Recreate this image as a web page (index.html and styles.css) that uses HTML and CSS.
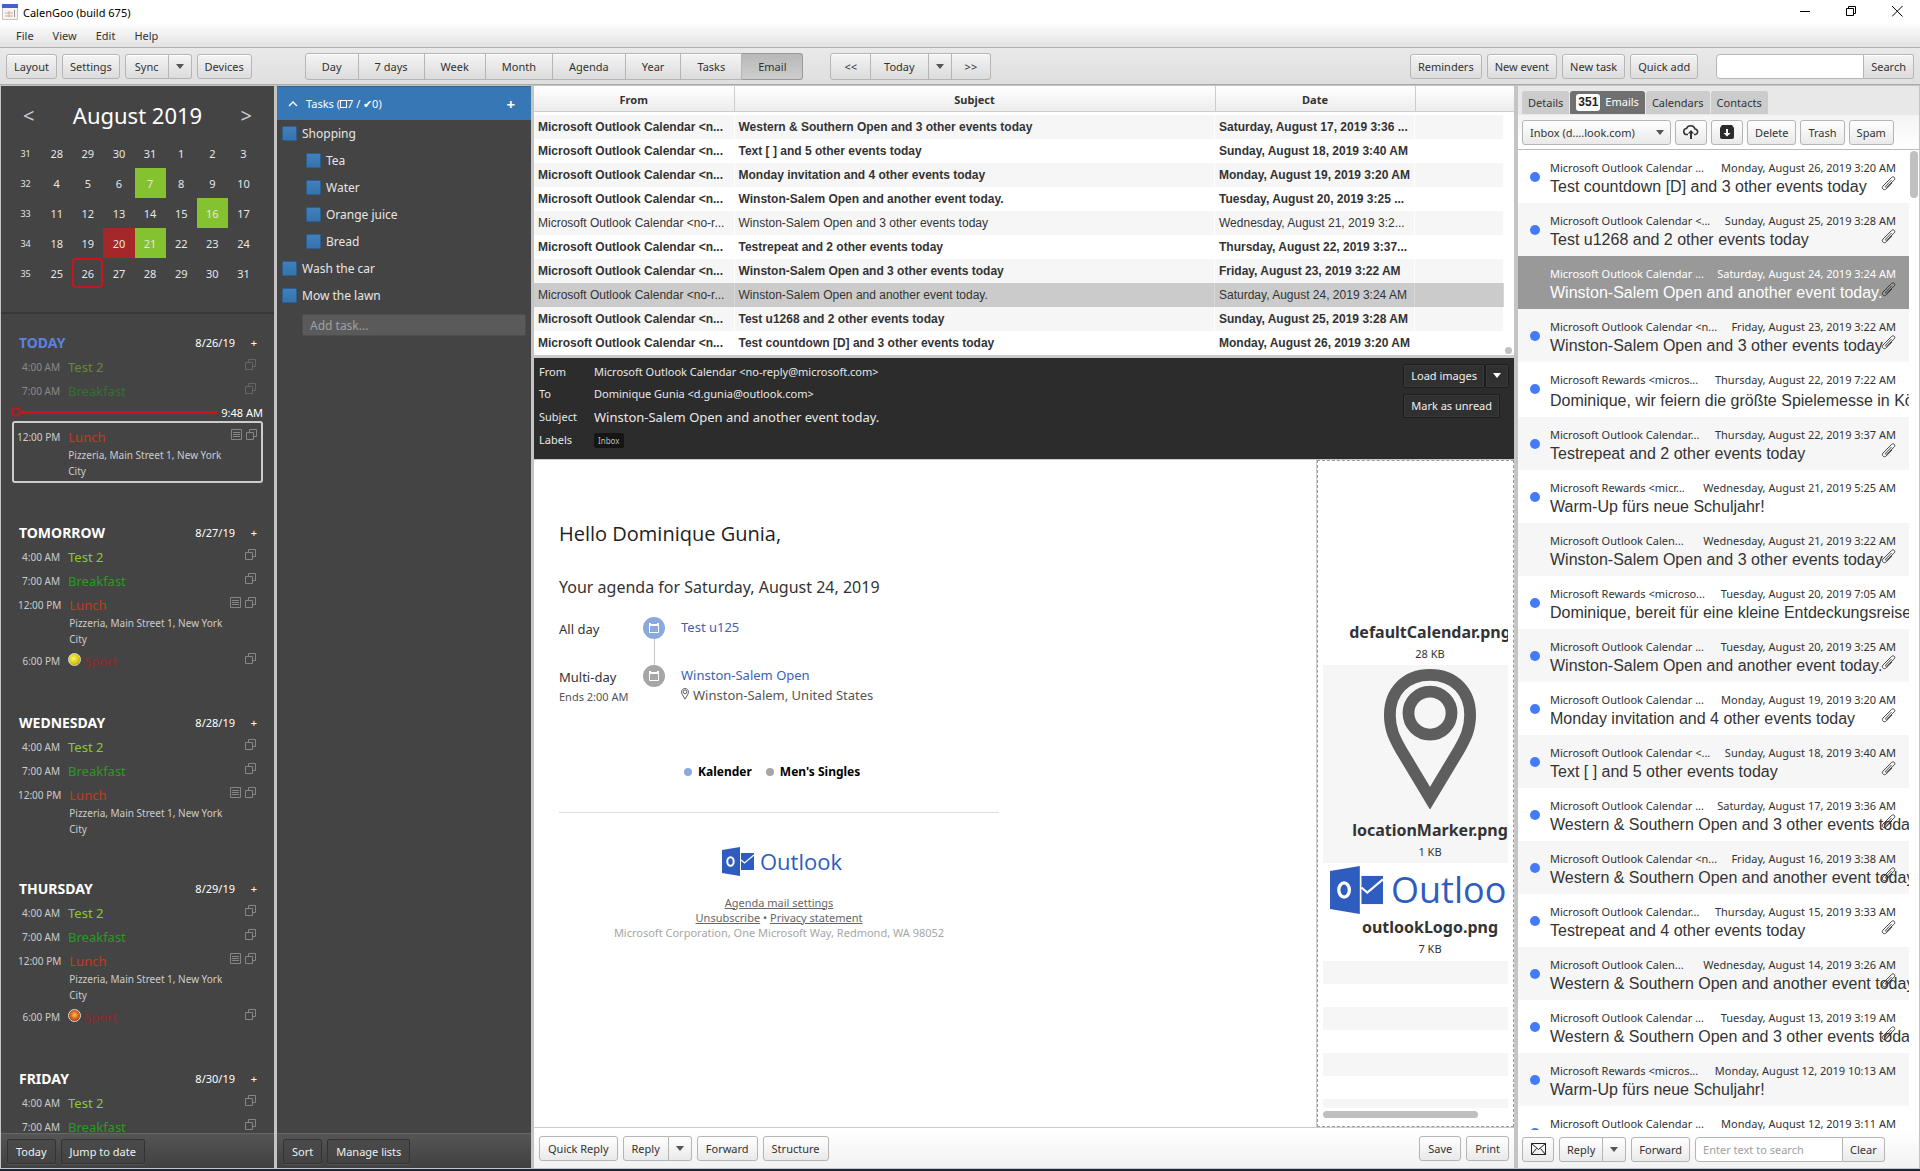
FILE: index.html
```html
<!DOCTYPE html>
<html lang="en">

<head>
    <meta charset="UTF-8">
    <meta name="viewport" content="width=device-width, initial-scale=1.0">
    <title>CalenGoo</title>
    <link rel="stylesheet" href="styles.css">
</head>

<body>
    <!-- shared icons -->
    <svg class="defs" width="0" height="0">
        <symbol id="copy" viewBox="0 0 11 11">
            <path d="M3.5 3V.5h7v7H8M.5 3.5h7v7h-7z" fill="none" stroke="currentColor" />
        </symbol>
        <symbol id="note" viewBox="0 0 11 11">
            <path d="M.5.5h10v10H.5zM2 3.5h7M2 5.5h7M2 7.5h7" fill="none" stroke="currentColor" />
        </symbol>
        <symbol id="clip" viewBox="0 0 15 15">
            <path d="M10.500 4 4.600 10.200c-.6.700.3 1.600 1 1L13.200 4C15 2 12.500-.3 10.500 1.500L2 10c-2 2.300 1 5 3.200 3L11 7" fill="none" stroke="currentColor" stroke-width=".9" />
        </symbol>
        <symbol id="outlook" viewBox="0 0 32 29">
            <path d="M0 3 18 0v29L0 26z" fill="#2f5cbf" />
            <ellipse cx="8.500" cy="14.500" rx="3.200" ry="4.300" fill="none" stroke="#fff" stroke-width="2" />
            <path d="M19 6h13v17H19z" fill="#2f5cbf" />
            <path d="m19 13 3.500 3L32 8" fill="none" stroke="#fff" stroke-width="1.300" />
        </symbol>
        <symbol id="pin" viewBox="0 0 94 144">
            <path d="M47 7C22 7 6 24 6 48c0 15 5 24 11 35l30 50 30-50c6-11 11-20 11-35C88 24 72 7 47 7z" fill="none" stroke="currentColor" stroke-width="12" />
            <circle cx="47" cy="46" r="22" fill="none" stroke="currentColor" stroke-width="12" />
        </symbol>
        <symbol id="cal" viewBox="0 0 22 22">
            <path d="M6.500 7.500h9v8h-9z" fill="none" stroke="#fff" />
            <path d="M6 6h2v1h6V6h2v3H6z" fill="#fff" />
        </symbol>
    </svg>

    <div class="titlebar">
        <svg width="16" height="16" viewBox="0 0 16 16">
            <path d="M.5 1.500h15v14H.5z" fill="#f4f4f4" stroke="#c4c4c4" />
            <path d="M0 0h16v4H0z" fill="#4560c8" />
            <path d="M3 9h8M3 12h8M7 7v6" stroke="#d9a98d" />
            <path d="M12.500 6v7" stroke="#999" />
        </svg>
        <span class="app-name">CalenGoo (build 675)</span>
        <div class="win-buttons">
            <button aria-label="Minimize"><svg width="11" height="11"><path d="M0 5.500h10" stroke="#000" /></svg></button>
            <button aria-label="Restore"><svg width="11" height="11"><path d="M2.500 2V.5h7v7H8M.5 2.500h7v7h-7z" fill="none" stroke="#000" /></svg></button>
            <button aria-label="Close"><svg width="11" height="11"><path d="m0 0 10.500 10.500M10.500 0 0 10.500" stroke="#000" /></svg></button>
        </div>
    </div>

    <nav class="menubar">
        <a href="#">File</a>
        <a href="#">View</a>
        <a href="#">Edit</a>
        <a href="#">Help</a>
    </nav>

    <div class="toolbar">
        <div class="group">
            <button class="btn">Layout</button>
            <button class="btn">Settings</button>
            <div class="split">
                <button class="btn">Sync</button>
                <button class="btn arrow" aria-label="Sync options"></button>
            </div>
            <button class="btn">Devices</button>
        </div>
        <div class="split views">
            <button class="btn">Day</button>
            <button class="btn">7 days</button>
            <button class="btn">Week</button>
            <button class="btn">Month</button>
            <button class="btn">Agenda</button>
            <button class="btn">Year</button>
            <button class="btn">Tasks</button>
            <button class="btn active">Email</button>
        </div>
        <div class="split pager">
            <button class="btn">&lt;&lt;</button>
            <button class="btn">Today</button>
            <button class="btn arrow" aria-label="Choose date"></button>
            <button class="btn">&gt;&gt;</button>
        </div>
        <div class="group right">
            <button class="btn">Reminders</button>
            <button class="btn">New event</button>
            <button class="btn">New task</button>
            <button class="btn">Quick add</button>
            <div class="split search">
                <input type="text" aria-label="Search">
                <button class="btn">Search</button>
            </div>
        </div>
    </div>

    <div class="main">
        <aside class="dark agenda-col">
            <div class="month">
                <div class="month-head">
                    <button aria-label="Previous month">&lt;</button>
                    <h1>August 2019</h1>
                    <button aria-label="Next month">&gt;</button>
                </div>
                <table class="days">
                    <tr><th>31</th><td>28</td><td>29</td><td>30</td><td>31</td><td>1</td><td>2</td><td>3</td></tr>
                    <tr><th>32</th><td>4</td><td>5</td><td>6</td><td class="green">7</td><td>8</td><td>9</td><td>10</td></tr>
                    <tr><th>33</th><td>11</td><td>12</td><td>13</td><td>14</td><td>15</td><td class="green">16</td><td>17</td></tr>
                    <tr><th>34</th><td>18</td><td>19</td><td class="red">20</td><td class="green">21</td><td>22</td><td>23</td><td>24</td></tr>
                    <tr><th>35</th><td>25</td><td class="today">26</td><td>27</td><td>28</td><td>29</td><td>30</td><td>31</td></tr>
                </table>
            </div>
            <div class="agenda">
                <section>
                    <header><h2 class="blue">TODAY</h2><span>8/26/19</span><button aria-label="Add event">+</button></header>
                    <div class="event past"><time>4:00 AM</time><span class="c-test">Test 2</span><svg><use href="#copy" /></svg></div>
                    <div class="event past"><time>7:00 AM</time><span class="c-food">Breakfast</span><svg><use href="#copy" /></svg></div>
                    <div class="now"><i class="knob"></i><i class="line"></i><span>9:48 AM</span></div>
                    <div class="selected">
                        <div class="event"><time>12:00 PM</time><span class="c-lunch">Lunch</span><svg><use href="#note" /></svg><svg><use href="#copy" /></svg><p>Pizzeria, Main Street 1, New York City</p></div>
                    </div>
                </section>
                <section>
                    <header><h2>TOMORROW</h2><span>8/27/19</span><button aria-label="Add event">+</button></header>
                    <div class="event"><time>4:00 AM</time><span class="c-test">Test 2</span><svg><use href="#copy" /></svg></div>
                    <div class="event"><time>7:00 AM</time><span class="c-food">Breakfast</span><svg><use href="#copy" /></svg></div>
                    <div class="event"><time>12:00 PM</time><span class="c-lunch">Lunch</span><svg><use href="#note" /></svg><svg><use href="#copy" /></svg><p>Pizzeria, Main Street 1, New York City</p></div>
                    <div class="event"><time>6:00 PM</time><span class="c-sport"><i class="ball"></i>Sport</span><svg><use href="#copy" /></svg></div>
                </section>
                <section>
                    <header><h2>WEDNESDAY</h2><span>8/28/19</span><button aria-label="Add event">+</button></header>
                    <div class="event"><time>4:00 AM</time><span class="c-test">Test 2</span><svg><use href="#copy" /></svg></div>
                    <div class="event"><time>7:00 AM</time><span class="c-food">Breakfast</span><svg><use href="#copy" /></svg></div>
                    <div class="event"><time>12:00 PM</time><span class="c-lunch">Lunch</span><svg><use href="#note" /></svg><svg><use href="#copy" /></svg><p>Pizzeria, Main Street 1, New York City</p></div>
                </section>
                <section>
                    <header><h2>THURSDAY</h2><span>8/29/19</span><button aria-label="Add event">+</button></header>
                    <div class="event"><time>4:00 AM</time><span class="c-test">Test 2</span><svg><use href="#copy" /></svg></div>
                    <div class="event"><time>7:00 AM</time><span class="c-food">Breakfast</span><svg><use href="#copy" /></svg></div>
                    <div class="event"><time>12:00 PM</time><span class="c-lunch">Lunch</span><svg><use href="#note" /></svg><svg><use href="#copy" /></svg><p>Pizzeria, Main Street 1, New York City</p></div>
                    <div class="event"><time>6:00 PM</time><span class="c-sport"><i class="ball orange"></i>Sport</span><svg><use href="#copy" /></svg></div>
                </section>
                <section>
                    <header><h2>FRIDAY</h2><span>8/30/19</span><button aria-label="Add event">+</button></header>
                    <div class="event"><time>4:00 AM</time><span class="c-test">Test 2</span><svg><use href="#copy" /></svg></div>
                    <div class="event"><time>7:00 AM</time><span class="c-food">Breakfast</span><svg><use href="#copy" /></svg></div>
                </section>
            </div>
            <div class="dark-bar">
                <button class="dbtn">Today</button>
                <button class="dbtn">Jump to date</button>
            </div>
        </aside>

        <aside class="dark tasks-col">
            <div class="tasks-head">
                <svg width="10" height="6"><path d="m1 5 4-4 4 4" fill="none" stroke="#fff" stroke-width="1.300" /></svg>
                <span>Tasks (<i class="box"></i>7 / ✔0)</span>
                <button aria-label="Add task">+</button>
            </div>
            <div class="tasks">
                <label><input type="checkbox">Shopping</label>
                <label class="sub"><input type="checkbox">Tea</label>
                <label class="sub"><input type="checkbox">Water</label>
                <label class="sub"><input type="checkbox">Orange juice</label>
                <label class="sub"><input type="checkbox">Bread</label>
                <label><input type="checkbox">Wash the car</label>
                <label><input type="checkbox">Mow the lawn</label>
                <input type="text" class="add-task" placeholder="Add task..." aria-label="Add task">
            </div>
            <div class="dark-bar">
                <button class="dbtn">Sort</button>
                <button class="dbtn">Manage lists</button>
            </div>
        </aside>

        <main class="mail">
            <div class="mail-table">
                <table>
                    <colgroup><col class="w-from"><col><col class="w-date"><col class="w-rest"></colgroup>
                    <thead>
                        <tr><th>From</th><th>Subject</th><th>Date</th><th></th></tr>
                    </thead>
                </table>
                <table class="rows">
                    <colgroup><col class="w-from"><col><col class="w-date"><col class="w-last"></colgroup>
                    <tbody>
                        <tr><td>Microsoft Outlook Calendar &lt;n...</td><td>Western &amp; Southern Open and 3 other events today</td><td>Saturday, August 17, 2019 3:36 ...</td><td></td></tr>
                        <tr><td>Microsoft Outlook Calendar &lt;n...</td><td>Text [ ] and 5 other events today</td><td>Sunday, August 18, 2019 3:40 AM</td><td></td></tr>
                        <tr><td>Microsoft Outlook Calendar &lt;n...</td><td>Monday invitation and 4 other events today</td><td>Monday, August 19, 2019 3:20 AM</td><td></td></tr>
                        <tr><td>Microsoft Outlook Calendar &lt;n...</td><td>Winston-Salem Open and another event today.</td><td>Tuesday, August 20, 2019 3:25 ...</td><td></td></tr>
                        <tr class="read"><td>Microsoft Outlook Calendar &lt;no-r...</td><td>Winston-Salem Open and 3 other events today</td><td>Wednesday, August 21, 2019 3:2...</td><td></td></tr>
                        <tr><td>Microsoft Outlook Calendar &lt;n...</td><td>Testrepeat and 2 other events today</td><td>Thursday, August 22, 2019 3:37...</td><td></td></tr>
                        <tr><td>Microsoft Outlook Calendar &lt;n...</td><td>Winston-Salem Open and 3 other events today</td><td>Friday, August 23, 2019 3:22 AM</td><td></td></tr>
                        <tr class="read current"><td>Microsoft Outlook Calendar &lt;no-r...</td><td>Winston-Salem Open and another event today.</td><td>Saturday, August 24, 2019 3:24 AM</td><td></td></tr>
                        <tr><td>Microsoft Outlook Calendar &lt;n...</td><td>Test u1268 and 2 other events today</td><td>Sunday, August 25, 2019 3:28 AM</td><td></td></tr>
                        <tr><td>Microsoft Outlook Calendar &lt;n...</td><td>Test countdown [D] and 3 other events today</td><td>Monday, August 26, 2019 3:20 AM</td><td></td></tr>
                    </tbody>
                </table>
                <i class="scroll-dot"></i>
            </div>

            <div class="mail-head">
                <dl>
                    <dt>From</dt><dd>Microsoft Outlook Calendar &lt;no-reply@microsoft.com&gt;</dd>
                    <dt>To</dt><dd>Dominique Gunia &lt;d.gunia@outlook.com&gt;</dd>
                    <dt>Subject</dt><dd class="subject">Winston-Salem Open and another event today.</dd>
                    <dt>Labels</dt><dd><span class="label">Inbox</span></dd>
                </dl>
                <div class="head-actions">
                    <div class="split">
                        <button class="dbtn">Load images</button>
                        <button class="dbtn arrow" aria-label="Image options"></button>
                    </div>
                    <button class="dbtn">Mark as unread</button>
                </div>
            </div>

            <div class="mail-content">
                <article class="message">
                    <h1>Hello Dominique Gunia,</h1>
                    <h2>Your agenda for Saturday, August 24, 2019</h2>
                    <div class="item">
                        <div class="when">All day</div>
                        <div class="mark"><svg class="circle"><use href="#cal" /></svg><i></i></div>
                        <div class="what"><a href="#">Test u125</a></div>
                    </div>
                    <div class="item">
                        <div class="when">Multi-day<small>Ends 2:00 AM</small></div>
                        <div class="mark"><svg class="circle gray"><use href="#cal" /></svg></div>
                        <div class="what"><a href="#">Winston-Salem Open</a><span><svg class="pin" width="8" height="12"><use href="#pin" /></svg>Winston-Salem, United States</span></div>
                    </div>
                    <div class="legend"><i></i>Kalender<i class="gray"></i>Men's Singles</div>
                    <footer>
                        <div class="logo"><svg width="32" height="29"><use href="#outlook" /></svg>Outlook</div>
                        <a href="#">Agenda mail settings</a>
                        <div><a href="#">Unsubscribe</a> • <a href="#">Privacy statement</a></div>
                        <p>Microsoft Corporation, One Microsoft Way, Redmond, WA 98052</p>
                    </footer>
                </article>
                <div class="attachments">
                    <ul>
                        <li class="first"><b>defaultCalendar.png</b><span>28 KB</span></li>
                        <li><svg class="pin" width="94" height="144"><use href="#pin" /></svg><b>locationMarker.png</b><span>1 KB</span></li>
                        <li>
                            <div class="logo big"><svg width="53" height="48"><use href="#outlook" /></svg>Outlook</div>
                            <b>outlookLogo.png</b><span>7 KB</span>
                        </li>
                        <li class="fill"></li>
                    </ul>
                    <i class="hscroll"></i>
                </div>
            </div>

            <div class="mail-bar">
                <button class="btn">Quick Reply</button>
                <div class="split">
                    <button class="btn">Reply</button>
                    <button class="btn arrow" aria-label="Reply options"></button>
                </div>
                <button class="btn">Forward</button>
                <button class="btn">Structure</button>
                <span class="space"></span>
                <button class="btn">Save</button>
                <button class="btn">Print</button>
            </div>
        </main>

        <aside class="inbox">
            <div class="tabs">
                <button>Details</button>
                <button class="active"><b>351</b>Emails</button>
                <button>Calendars</button>
                <button>Contacts</button>
            </div>
            <div class="inbox-tools">
                <span class="select">
                    <select aria-label="Folder">
                        <option>Inbox (d....look.com)</option>
                    </select>
                </span>
                <button class="btn icon" aria-label="Upload"><svg width="16" height="16"><path d="M5 10.500H4a3 3 0 0 1-.5-6A4.500 4.500 0 0 1 12 5a2.800 2.800 0 0 1 .5 5.500H11" fill="none" stroke="#333" stroke-width="1.600" /><path d="M8 6 4.800 9.500H7V15h2V9.500h2.200z" fill="#333" /></svg></button>
                <button class="btn icon" aria-label="Archive"><svg width="14" height="14"><path d="M2 0h10l2 3v9a2 2 0 0 1-2 2H2a2 2 0 0 1-2-2V3z" fill="#2b2b2b" /><path d="M6 4h2v4h2.500L7 11.500 3.500 8H6z" fill="#fff" /></svg></button>
                <button class="btn">Delete</button>
                <button class="btn">Trash</button>
                <button class="btn">Spam</button>
            </div>
            <div class="list-wrap">
                <ul class="list">
                    <li class="unread"><div><span>Microsoft Outlook Calendar ...</span><time>Monday, August 26, 2019 3:20 AM</time></div><p>Test countdown [D] and 3 other events today</p><svg><use href="#clip" /></svg></li>
                    <li class="unread"><div><span>Microsoft Outlook Calendar &lt;...</span><time>Sunday, August 25, 2019 3:28 AM</time></div><p>Test u1268 and 2 other events today</p><svg><use href="#clip" /></svg></li>
                    <li class="current"><div><span>Microsoft Outlook Calendar ...</span><time>Saturday, August 24, 2019 3:24 AM</time></div><p>Winston-Salem Open and another event today.</p><svg><use href="#clip" /></svg></li>
                    <li class="unread"><div><span>Microsoft Outlook Calendar &lt;n...</span><time>Friday, August 23, 2019 3:22 AM</time></div><p>Winston-Salem Open and 3 other events today</p><svg><use href="#clip" /></svg></li>
                    <li class="unread tall"><div><span>Microsoft Rewards &lt;micros...</span><time>Thursday, August 22, 2019 7:22 AM</time></div><p>Dominique, wir feiern die größte Spielemesse in Köln</p></li>
                    <li class="unread"><div><span>Microsoft Outlook Calendar...</span><time>Thursday, August 22, 2019 3:37 AM</time></div><p>Testrepeat and 2 other events today</p><svg><use href="#clip" /></svg></li>
                    <li class="unread"><div><span>Microsoft Rewards &lt;micr...</span><time>Wednesday, August 21, 2019 5:25 AM</time></div><p>Warm-Up fürs neue Schuljahr!</p></li>
                    <li><div><span>Microsoft Outlook Calen...</span><time>Wednesday, August 21, 2019 3:22 AM</time></div><p>Winston-Salem Open and 3 other events today</p><svg><use href="#clip" /></svg></li>
                    <li class="unread"><div><span>Microsoft Rewards &lt;microso...</span><time>Tuesday, August 20, 2019 7:05 AM</time></div><p>Dominique, bereit für eine kleine Entdeckungsreise?</p></li>
                    <li class="unread"><div><span>Microsoft Outlook Calendar ...</span><time>Tuesday, August 20, 2019 3:25 AM</time></div><p>Winston-Salem Open and another event today.</p><svg><use href="#clip" /></svg></li>
                    <li class="unread"><div><span>Microsoft Outlook Calendar ...</span><time>Monday, August 19, 2019 3:20 AM</time></div><p>Monday invitation and 4 other events today</p><svg><use href="#clip" /></svg></li>
                    <li class="unread"><div><span>Microsoft Outlook Calendar &lt;...</span><time>Sunday, August 18, 2019 3:40 AM</time></div><p>Text [ ] and 5 other events today</p><svg><use href="#clip" /></svg></li>
                    <li class="unread"><div><span>Microsoft Outlook Calendar ...</span><time>Saturday, August 17, 2019 3:36 AM</time></div><p>Western &amp; Southern Open and 3 other events today</p><svg><use href="#clip" /></svg></li>
                    <li class="unread"><div><span>Microsoft Outlook Calendar &lt;n...</span><time>Friday, August 16, 2019 3:38 AM</time></div><p>Western &amp; Southern Open and another event today.</p><svg><use href="#clip" /></svg></li>
                    <li class="unread"><div><span>Microsoft Outlook Calendar...</span><time>Thursday, August 15, 2019 3:33 AM</time></div><p>Testrepeat and 4 other events today</p><svg><use href="#clip" /></svg></li>
                    <li class="unread"><div><span>Microsoft Outlook Calen...</span><time>Wednesday, August 14, 2019 3:26 AM</time></div><p>Western &amp; Southern Open and another event today.</p><svg><use href="#clip" /></svg></li>
                    <li class="unread"><div><span>Microsoft Outlook Calendar ...</span><time>Tuesday, August 13, 2019 3:19 AM</time></div><p>Western &amp; Southern Open and 3 other events today</p><svg><use href="#clip" /></svg></li>
                    <li class="unread"><div><span>Microsoft Rewards &lt;micros...</span><time>Monday, August 12, 2019 10:13 AM</time></div><p>Warm-Up fürs neue Schuljahr!</p></li>
                    <li class="unread"><div><span>Microsoft Outlook Calendar ...</span><time>Monday, August 12, 2019 3:11 AM</time></div></li>
                </ul>
                <i class="vscroll"></i>
            </div>
            <div class="inbox-bar">
                <button class="btn icon" aria-label="New mail"><svg width="15" height="12"><path d="M.5.5h14v11H.5zl7 6 7-6M.5 11.500l5-6M14.500 11.500l-5-6" fill="none" stroke="#222" /></svg></button>
                <div class="split">
                    <button class="btn">Reply</button>
                    <button class="btn arrow" aria-label="Reply options"></button>
                </div>
                <button class="btn">Forward</button>
                <div class="split search">
                    <input type="text" placeholder="Enter text to search" aria-label="Search emails">
                    <button class="btn">Clear</button>
                </div>
            </div>
        </aside>
    </div>
</body>

</html>
```

FILE: styles.css
```css
*,
*::before,
*::after {
    box-sizing: border-box;
}

body {
    margin: 0;
    height: 100vh;
    display: flex;
    flex-direction: column;
    overflow: hidden;
    font-family: "Noto Sans", "Open Sans", sans-serif;
    font-size: 11px;
    color: #333;
    background-color: #fff;
    border-bottom: 2px solid #1c2735;
}

button,
input,
select {
    font: inherit;
    color: inherit;
}

button {
    padding: 0;
    border: none;
    background: none;
    white-space: nowrap;
}

h1,
h2,
p,
ul,
dl,
dd {
    margin: 0;
    padding: 0;
}

a {
    color: inherit;
    text-decoration: none;
}

.defs {
    position: absolute;
}

/* title and menu */
.titlebar {
    display: flex;
    align-items: center;
    height: 24px;
    padding-left: 2px;
    color: #000;
}

.app-name {
    margin-left: 5px;
    flex: 1;
}

.win-buttons {
    display: flex;
}

.win-buttons button {
    width: 46px;
    height: 20px;
}

.menubar {
    display: flex;
    gap: 19px;
    height: 24px;
    padding-left: 16px;
    line-height: 24px;
    background: linear-gradient(#fdfdfd, #e2e2e2);
    border-bottom: 1px solid #b0b0b0;
}

/* buttons */
.btn {
    height: 25px;
    padding: 0 7px;
    border: 1px solid #b5b5b5;
    border-radius: 3px;
    background: linear-gradient(#f4f4f4, #dcdcdc);
    box-shadow: inset 0 1px #fff;
}

.split {
    display: flex;
}

.split .btn {
    padding: 0 9px;
    border-radius: 0;
}

.search .btn,
.inbox .btn {
    padding: 0 7px;
}

.mail-bar .btn {
    padding: 0 8px;
}

.split .btn + .btn,
.split input + .btn {
    border-left: none;
}

.split .btn:first-child {
    border-radius: 3px 0 0 3px;
}

.split .btn:last-child {
    border-radius: 0 3px 3px 0;
}

.arrow::after {
    content: "";
    display: block;
    width: 8px;
    margin: 0 auto;
    border: 4px solid transparent;
    border-top: 5px solid #555;
    border-bottom: none;
}

.btn.arrow {
    width: 23px;
    padding: 0;
}

.search input {
    min-width: 0;
    height: 25px;
    padding: 0 7px;
    border: 1px solid #b5b5b5;
    border-radius: 4px 0 0 4px;
    background-color: #fff;
}

.toolbar {
    display: flex;
    align-items: center;
    height: 37px;
    padding: 0 6px;
    background: linear-gradient(#e9e9e9, #dfdfdf);
    border-bottom: 1px solid #aaa;
}

.group {
    display: flex;
    gap: 5px;
}

.views {
    margin-left: 53px;
}

.views .btn,
.pager .btn {
    height: 27px;
    padding: 0 16px;
}

.pager {
    margin-left: 27px;
}

.pager .btn {
    padding: 0 13px;
}

.toolbar .btn.active {
    background: linear-gradient(#b8b8b8, #cdcdcd);
    border-color: #999;
    box-shadow: none;
}

.pager .btn.arrow {
    padding: 0;
}

.right {
    margin-left: auto;
}

.right .search {
    margin-left: 13px;
}

.right .search input {
    width: 148px;
}

/* columns */
.main {
    flex: 1;
    min-height: 0;
    display: grid;
    grid-template-columns: 273px 254px 1fr 401px;
    grid-template-rows: minmax(0, 1fr);
    column-gap: 3px;
    padding: 1px;
    background-color: #c4c4c4;
}

.dark {
    display: flex;
    flex-direction: column;
    background-color: #444;
    color: #e6e6e6;
    min-height: 0;
}

.dark-bar {
    display: flex;
    align-items: center;
    gap: 5px;
    height: 35px;
    padding: 0 6px;
    background: linear-gradient(#555, #404040);
    border-top: 1px solid #666;
}

.dbtn {
    height: 25px;
    padding: 0 8px;
    border: 1px solid #333;
    border-radius: 2px;
    color: #f0f0f0;
    background: linear-gradient(#4a4a4a, #434343);
    box-shadow: 0 1px #555;
}

/* month */
.month {
    height: 228px;
    border-bottom: 2px solid #383838;
}

.month-head {
    display: flex;
    align-items: center;
    justify-content: space-between;
    height: 52px;
    padding: 6px 22px 0;
}

.month-head h1 {
    font-size: 22px;
    font-weight: normal;
    color: #fff;
}

.month-head button {
    font-size: 20px;
    color: #ccc;
}

.days {
    margin-left: 9px;
    border-collapse: collapse;
    table-layout: fixed;
    width: 249px;
}

.days td,
.days th {
    height: 30px;
    padding: 0;
    width: 31px;
    text-align: center;
}

.days th {
    font-size: 9px;
    font-weight: normal;
}

.days .green {
    background-color: #84c22f;
}

.days .red {
    background-color: #a52729;
}

.days .today {
    border-radius: 4px;
    box-shadow: inset 0 0 0 2px #d0121b;
}

/* agenda */
.agenda {
    flex: 1;
    min-height: 0;
    overflow: hidden;
    padding: 15px 11px 0;
}

.agenda section {
    margin-bottom: 36px;
}

.agenda header {
    display: flex;
    align-items: center;
    height: 26px;
    padding: 0 6px 0 7px;
    color: #fff;
}

.agenda h2 {
    flex: 1;
    font-size: 14px;
    font-weight: bold;
}

.agenda header button {
    width: 22px;
    text-align: right;
}

.agenda h2.blue {
    color: #5b82de;
}

.event {
    display: grid;
    grid-template-columns: minmax(42px, auto) 1fr auto auto;
    column-gap: 4px;
    padding: 2px 7px 2px 6px;
    line-height: 20px;
}

.event time {
    grid-column: 1;
    font-size: 10px;
    text-align: right;
    white-space: nowrap;
    color: #ccc;
}

.event > span {
    padding-left: 4px;
    font-size: 13px;
}

.event svg {
    width: 11px;
    height: 11px;
    margin-top: 2px;
    color: #858585;
}

.event > span + svg:last-child {
    grid-column: 4;
}

.event p {
    grid-column: 2 / 5;
    padding-left: 4px;
    padding-right: 20px;
    font-size: 10px;
    line-height: 16px;
    color: #ccc;
}

.past {
    opacity: 0.5;
}

.c-test {
    color: #8cc832;
}

.c-food {
    color: #2c9a22;
}

.c-lunch {
    color: #c53a1e;
}

.c-sport {
    color: #96262a;
}

.ball {
    display: inline-block;
    width: 13px;
    height: 13px;
    margin-right: 3px;
    border-radius: 50%;
    border: 1px solid #ddd;
    background: radial-gradient(circle at 40% 40%, #f9f36a, #d6c400 60%, #555);
}

.ball.orange {
    background: radial-gradient(circle at 50% 45%, #ffc04d, #d0561a 55%, #3a2018);
}

.now {
    display: flex;
    align-items: center;
    height: 18px;
    color: #fff;
}

.knob {
    width: 10px;
    height: 10px;
    border: 2px solid #c8141e;
    border-radius: 50%;
    margin-left: -1px;
}

.line {
    flex: 1;
    height: 3px;
    margin-right: 4px;
    background-color: #c8141e;
}

.selected {
    border: 2px solid #ccc;
    border-radius: 3px;
    padding-top: 2px;
}

.selected .event {
    padding: 2px 4px 2px 3px;
}

/* tasks */
.tasks-head {
    display: flex;
    align-items: center;
    height: 34px;
    padding: 0 16px 0 11px;
    color: #fff;
    background-color: #3777b5;
    border-top: 1px solid #2f6499;
}

.tasks-head span {
    flex: 1;
    margin-left: 8px;
}

.tasks-head button {
    font-size: 15px;
    font-weight: bold;
}

.box {
    display: inline-block;
    width: 7px;
    height: 8px;
    border: 1px solid #fff;
}

.tasks {
    flex: 1;
    min-height: 0;
    overflow: hidden;
}

.tasks label {
    display: flex;
    align-items: center;
    gap: 5px;
    height: 27px;
    padding-left: 5px;
    font-size: 12px;
}

.tasks .sub {
    padding-left: 29px;
}

.tasks input[type=checkbox] {
    appearance: none;
    width: 15px;
    height: 15px;
    margin: 0;
    border: 1px solid #2b5f91;
    border-radius: 1px;
    background: linear-gradient(#4180bb, #3573ad);
}

.add-task {
    display: block;
    width: 224px;
    height: 22px;
    margin: 5px 0 0 25px;
    padding: 0 7px;
    border: 1px solid #4e4e4e;
    border-radius: 2px;
    background-color: #5a5a5a;
    font-size: 12px;
}

::placeholder {
    color: #a0a0a0;
}

/* mail */
.mail {
    display: flex;
    flex-direction: column;
    min-width: 0;
    min-height: 0;
    margin-right: 1px;
    background-color: #fff;
}

.mail-table {
    position: relative;
    border-bottom: 3px solid #ccc;
    font-family: "Liberation Sans", Arial, sans-serif;
    font-size: 12px;
}

.mail-table table {
    width: 100%;
    table-layout: fixed;
    border-collapse: collapse;
}

.mail-table th {
    height: 25px;
    padding: 2px 0 0;
    font-family: "Noto Sans", "Open Sans", sans-serif;
    font-size: 11px;
    font-weight: bold;
    background: linear-gradient(#fff, #ececec);
    border-right: 1px solid #ccc;
    border-bottom: 1px solid #ccc;
}

.mail-table th:last-child {
    border-right: none;
}

.w-from,
.w-date {
    width: 200px;
}

.w-rest {
    width: 99px;
}

.w-last {
    width: 89px;
}

.mail-table table.rows {
    width: calc(100% - 10px);
    margin-top: 3px;
}

.rows td {
    height: 24px;
    padding: 0 4px;
    font-weight: bold;
    white-space: nowrap;
    overflow: hidden;
    border-right: 1px solid #fff;
}

.rows tr:nth-child(odd) {
    background-color: #f6f6f6;
}

.rows .read td {
    font-weight: normal;
}

.rows tr.current {
    background-color: #cbcbcb;
}

.rows .current td {
    border-color: #d8d8d8;
}

.scroll-dot {
    position: absolute;
    right: 2px;
    bottom: 1px;
    width: 7px;
    height: 7px;
    border-radius: 50%;
    background-color: #c0c0c0;
}

.mail-head {
    display: flex;
    justify-content: space-between;
    height: 102px;
    padding: 3px 5px 0;
    color: #e8e8e8;
    background-color: #2c2c2c;
    border-bottom: 1px solid #ccc;
}

.mail-head dl {
    display: grid;
    grid-template-columns: 55px auto;
    grid-template-rows: 22px 22px 24px 22px;
    align-items: center;
}

.mail-head .subject {
    font-size: 13px;
}

.label {
    display: inline-block;
    padding: 0 4px;
    border-radius: 2px;
    font-size: 8px;
    line-height: 15px;
    color: #bbb;
    background-color: #151515;
    vertical-align: middle;
}

.head-actions {
    display: flex;
    flex-direction: column;
    align-items: flex-start;
    gap: 6px;
    padding-top: 3px;
}

.mail-head .dbtn {
    height: 24px;
    padding: 0 7px;
    border-color: #1c1c1c;
    background: #303030;
    box-shadow: inset 0 0 0 1px #3a3a3a;
}

.mail-head .dbtn.arrow {
    width: 24px;
}

.mail-head .arrow::after {
    border-top-color: #fff;
}

.mail-content {
    flex: 1;
    min-height: 0;
    display: flex;
}

.message {
    flex: 1;
    min-width: 0;
    padding: 57px 25px 0;
    font-size: 13px;
    overflow: hidden;
}

.message h1 {
    font-family: "Open Sans", "Noto Sans", sans-serif;
    font-size: 20px;
    font-weight: normal;
    line-height: 34px;
    color: #222;
}

.message h2 {
    margin-top: 22px;
    font-size: 16px;
    font-weight: normal;
    line-height: 28px;
}

.item {
    display: flex;
    height: 48px;
    line-height: 20px;
}

.message h2 + .item {
    margin-top: 16px;
}

.when {
    width: 84px;
    padding-top: 2px;
}

.when small {
    display: block;
    font-size: 11px;
    color: #555;
}

.mark {
    width: 38px;
}

.mark i {
    display: block;
    width: 1px;
    height: 26px;
    margin: 0 0 0 11px;
    background-color: #c8c8c8;
}

.circle {
    display: block;
    width: 22px;
    height: 22px;
    border-radius: 50%;
    background-color: #8aaade;
}

.circle.gray {
    background-color: #a6a6a6;
}

.what a {
    display: block;
    color: #3a62b8;
}

.what span {
    color: #555;
}

.pin {
    color: #5e5e5e;
}

.what .pin {
    margin-right: 4px;
}

.legend {
    display: flex;
    align-items: center;
    width: 440px;
    margin-top: 49px;
    padding: 0 0 30px 125px;
    font-size: 12px;
    font-weight: bold;
    line-height: 20px;
    color: #000;
    border-bottom: 1px solid #ddd;
}

.legend i {
    width: 8px;
    height: 8px;
    margin-right: 6px;
    border-radius: 50%;
    background-color: #8aaade;
}

.legend .gray {
    margin-left: 14px;
    background-color: #a6a6a6;
}

.message footer {
    width: 440px;
    padding-top: 34px;
    font-size: 11px;
    line-height: 15px;
    text-align: center;
    color: #666;
}

.message footer a {
    text-decoration: underline;
}

.message footer p {
    color: #a6a6a6;
}

.logo {
    display: flex;
    align-items: center;
    justify-content: center;
    gap: 6px;
    height: 29px;
    margin-bottom: 19px;
    padding-left: 6px;
    font-family: "Open Sans", "Noto Sans", sans-serif;
    font-size: 22px;
    color: #2f5cbf;
}

.logo.big {
    gap: 8px;
    height: 48px;
    margin: 0;
    justify-content: flex-start;
    font-size: 36px;
}

.attachments {
    width: 197px;
    display: flex;
    flex-direction: column;
    padding: 5px;
    border: 1px dashed #999;
    outline: 1px solid #ccc;
}

.attachments ul {
    flex: 1;
    min-height: 0;
    overflow: hidden;
    list-style: none;
}

.attachments li {
    display: flex;
    flex-direction: column;
    align-items: center;
    width: 214px;
    height: 98px;
    padding-top: 3px;
}

.attachments li:nth-child(2) {
    height: 198px;
    background-color: #f6f6f6;
}

.attachments .first {
    height: 199px;
    justify-content: flex-end;
}

.attachments b {
    font-size: 16px;
    line-height: 26px;
    padding-top: 8px;
}

.attachments li:nth-child(3) b {
    padding-top: 0;
}

.attachments li span {
    line-height: 17px;
    margin-bottom: 3px;
}

.attachments .big {
    align-self: stretch;
    padding-left: 7px;
}

.attachments .fill {
    height: 150px;
    background: repeating-linear-gradient(#f6f6f6 0 23px, #fff 23px 46px);
}

.hscroll {
    width: 155px;
    height: 7px;
    margin: 3px 0;
    border-radius: 4px;
    background-color: #bfbfbf;
}

.mail-bar,
.inbox-bar {
    display: flex;
    align-items: center;
    gap: 5px;
    height: 41px;
    padding: 0 5px;
    background: linear-gradient(#fff, #f2f2f2);
    border-top: 1px solid #ccc;
}

.mail-bar .btn,
.inbox .btn {
    background: linear-gradient(#fff, #e9e9e9);
}

.space {
    flex: 1;
}

/* inbox */
.inbox {
    display: flex;
    flex-direction: column;
    min-height: 0;
    background-color: #fff;
}

.tabs {
    display: flex;
    align-items: flex-end;
    gap: 1px;
    height: 29px;
    padding: 0 4px 1px;
    background-color: #e8e8e8;
}

.tabs button {
    height: 23px;
    padding: 0 6px;
    border-radius: 3px 3px 0 0;
    background-color: #ccc;
}

.tabs .active {
    color: #fff;
    background-color: #707070;
}

.tabs b {
    display: inline-block;
    margin-right: 5px;
    padding: 0 2px;
    border-radius: 3px;
    font-family: "Liberation Sans", Arial, sans-serif;
    font-size: 12px;
    line-height: 17px;
    color: #222;
    background-color: #fff;
}

.inbox-tools {
    display: flex;
    align-items: center;
    gap: 4px;
    height: 35px;
    padding: 0 4px;
    background: linear-gradient(#f4f4f4, #fff);
    border-bottom: 1px solid #bbb;
}

.select {
    position: relative;
    width: 149px;
}

.select select {
    appearance: none;
    width: 100%;
    height: 25px;
    padding: 0 7px;
    border: 1px solid #b5b5b5;
    border-radius: 3px;
    background: linear-gradient(#fff, #e9e9e9);
}

.select::after {
    content: "";
    position: absolute;
    top: 10px;
    right: 7px;
    border: 4px solid transparent;
    border-top: 5px solid #555;
    border-bottom: none;
}

.btn.icon {
    display: flex;
    align-items: center;
    justify-content: center;
    width: 32px;
    padding: 0;
}

.list-wrap {
    flex: 1;
    min-height: 0;
    display: flex;
    overflow: hidden;
}

.list {
    flex: 1;
    min-width: 0;
    list-style: none;
}

.list li {
    position: relative;
    height: 53px;
    padding: 10px 0 0 32px;
    overflow: hidden;
}

.list li:nth-child(even) {
    background-color: #f6f6f6;
}

.list li.tall {
    height: 55px;
}

.list div {
    display: flex;
    justify-content: space-between;
    padding-right: 13px;
    line-height: 16px;
    white-space: nowrap;
}

.list p {
    font-family: "Liberation Sans", Arial, sans-serif;
    font-size: 16px;
    line-height: 22px;
    white-space: nowrap;
}

.list .tall p {
    line-height: 26px;
}

.unread::before {
    content: "";
    position: absolute;
    left: 12px;
    top: 22px;
    width: 10px;
    height: 10px;
    border-radius: 50%;
    background-color: #437bfb;
}

.list svg {
    position: absolute;
    right: 13px;
    top: 26px;
    width: 15px;
    height: 15px;
    color: #333;
}

.list li.current {
    color: #fff;
    background-color: #999;
}

.vscroll {
    width: 8px;
    height: 47px;
    margin: 1px 1px 0;
    border-radius: 4px;
    background-color: #c0c0c0;
}

.inbox-bar {
    height: 38px;
    padding: 0 4px;
    border-top: none;
}

.inbox-bar .search input {
    width: 148px;
}
```
